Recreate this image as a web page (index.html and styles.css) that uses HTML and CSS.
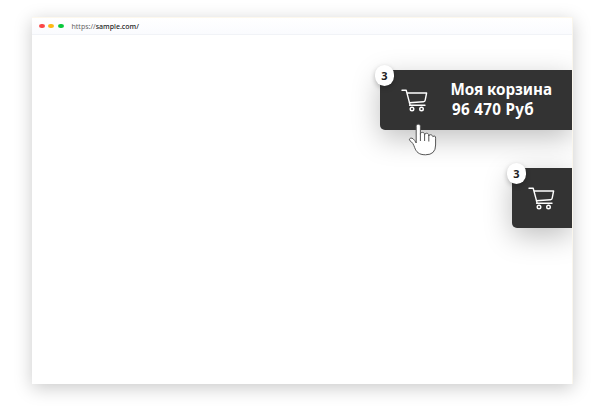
FILE: index.html
```
<!DOCTYPE html>
<html lang="ru">
<head>
<meta charset="utf-8">
<title>Моя корзина</title>
<link rel="stylesheet" href="styles.css">
</head>
<body>
<svg width="0" height="0" class="defs">
  <symbol id="cart" viewBox="0 0 27 23">
    <path d="M1 1.3H5.2L9 15.6M6.2 4H25.6L24.2 11.2Q24 12.6 22.5 12.7L8.3 13.7M8.6 16.2H24"/>
    <circle cx="11" cy="20" r="1.8"/>
    <circle cx="20.5" cy="20" r="1.8"/>
  </symbol>
</svg>
<main class="browser">
  <header class="bar">
    <i class="dot red"></i><i class="dot yellow"></i><i class="dot green"></i>
    <span class="url">https://<b>sample.com/</b></span>
  </header>
  <section class="page">
    <div class="basket wide">
      <span class="badge">3</span>
      <svg class="cart" width="27" height="23"><use href="#cart"/></svg>
      <div class="info"><div class="title">Моя корзина</div><div class="sum">96 470 Руб</div></div>
      <svg class="hand" width="30" height="35" viewBox="0 0 30 35">
        <path d="M8.2 20V3.5C8.2 .4 12.4 .4 12.4 3.5V11.2C12.4 8.8 16.4 8.8 16.6 11.2V11.8C16.8 9.6 20.6 9.8 20.8 12V13C21.2 11 24.4 11.4 24.8 13.6Q27.6 11.8 27.6 15.2V22Q27.6 31.8 17.5 31.8C10.5 31.8 8.2 28.6 6.7 24.7C5.4 21 4.4 19.4 2 17.8C.2 15.6 3 14.2 5.1 15.8Q6.8 17.1 8.2 20Z"/>
        <path class="folds" d="M12.4 10.5V18M16.6 11V18M20.8 12V18.5"/>
      </svg>
    </div>
    <div class="basket small">
      <span class="badge">3</span>
      <svg class="cart" width="27" height="23"><use href="#cart"/></svg>
    </div>
  </section>
</main>
</body>
</html>
```
FILE: styles.css
```
* { box-sizing: border-box; }
body {
  display: flow-root;
  min-height: 415px;
  margin: 0;
  background: #fff;
  font-family: "Noto Sans", "Open Sans", sans-serif;
}
.defs { position: absolute; }
.browser {
  width: 541px;
  height: 367px;
  margin: 17px 0 0 32px;
  background: #fff;
  border-right: 1px solid #faf6ec;
  box-shadow: 0 4px 17px rgba(0, 0, 0, .21);
}
.bar {
  height: 18px;
  display: flex;
  align-items: center;
  gap: 3.5px;
  padding-left: 6.5px;
  background: linear-gradient(#fff, #fafbfe);
  border-top: 1px solid #fdf8ed;
  border-bottom: 1px solid #f1f3f7;
}
.dot { width: 6px; height: 4.6px; border-radius: 50%; }
.red { background: #fb4646; }
.yellow { background: #fdb813; }
.green { background: #08c83b; }
.url {
  margin: 2px 0 0 4.5px;
  font-size: 7px;
  line-height: 10px;
  color: #666;
  white-space: nowrap;
}
.url b { font-weight: 500; color: #222; }
.page {
  height: 349px;
  padding-top: 35px;
  overflow: hidden;
  display: flex;
  flex-direction: column;
  align-items: flex-end;
  gap: 38px;
}
.basket {
  position: relative;
  height: 60px;
  flex: none;
  display: flex;
  align-items: flex-start;
  background: #333;
  border-radius: 5px 0 0 5px;
  box-shadow: 0 8px 28px rgba(0, 0, 0, .25);
}
.wide { width: 192px; padding-left: 21px; }
.small { width: 60px; padding-left: 16px; }
.badge {
  position: absolute;
  left: -5px;
  top: -5px;
  width: 19px;
  height: 21px;
  border-radius: 10px;
  background: #fff;
  box-shadow: 0 2px 5px rgba(0, 0, 0, .25);
  color: #222;
  font-size: 11px;
  line-height: 22px;
  font-weight: 700;
  text-align: center;
}
.cart {
  flex: none;
  margin-top: 19px;
  fill: none;
  stroke: #fff;
  stroke-width: 1.4;
  stroke-linecap: round;
  stroke-linejoin: round;
}
.info {
  margin: 10px 0 0 22.5px;
  color: #fff;
  font-size: 15.2px;
  font-weight: 700;
  line-height: 19.5px;
  white-space: nowrap;
}
.title { letter-spacing: -.04px; }
.sum { padding-left: 1.5px; letter-spacing: .3px; }
.hand {
  position: absolute;
  left: 28px;
  top: 53px;
  fill: #fff;
  stroke: #555;
  stroke-width: 1;
  stroke-linejoin: round;
}
.hand .folds { fill: none; }
```
